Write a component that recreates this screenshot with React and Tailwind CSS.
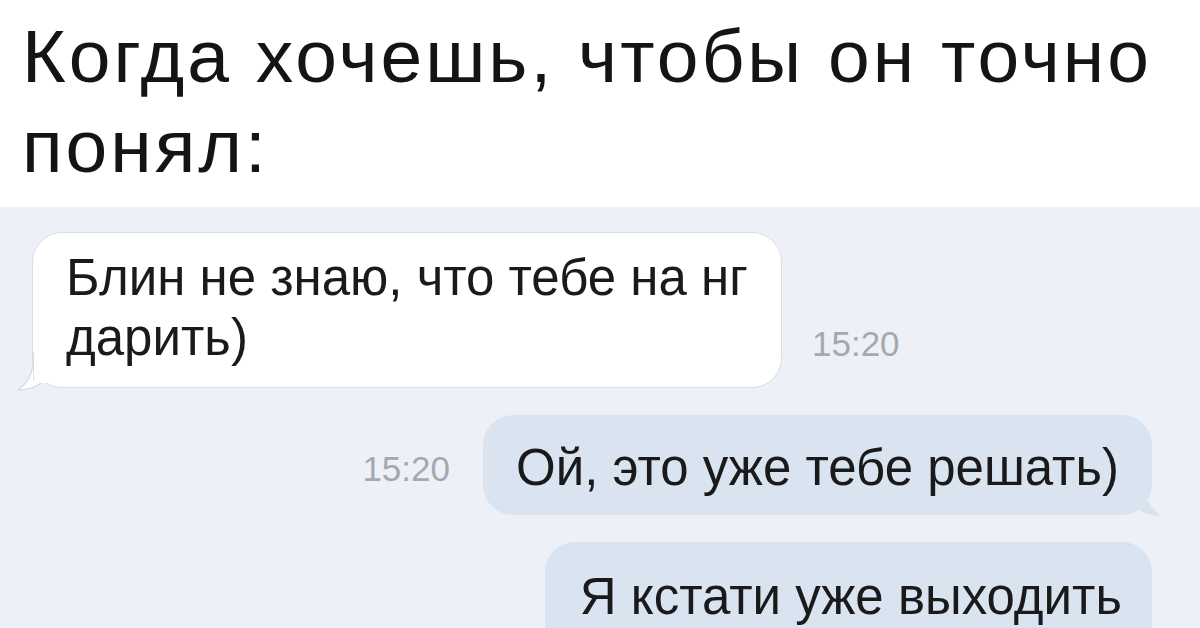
import React from 'react';

const FONT = { fontFamily: '"Liberation Sans", Arial, sans-serif' };

// Incoming bubble tail, bottom-left
const TailLeft = () => (
  <svg className="absolute left-[-16px] bottom-[-5px]" width="40" height="40" viewBox="0 0 40 40">
    <path d="M17 0 C17 20 12 30 1 38 C10 38 20 35 28 28 L17 28 Z" fill="#ffffff" stroke="#d8dce2" strokeWidth="1.5" />
    <rect x="17" y="0" width="20" height="31" fill="#ffffff" />
  </svg>
);

// Outgoing bubble tail, bottom-right
const TailRight = () => (
  <svg className="absolute right-[-24px] bottom-[-3px]" width="40" height="40" viewBox="0 0 40 40">
    <path d="M4 4 C10 22 16 32 26 38 C16 38 8 36 0 30 Z" fill="#dae4f0" />
  </svg>
);

const Time = ({ children, className = '' }) => (
  <span className={`text-[35px] leading-none text-[#a4a9b1] ${className}`}>{children}</span>
);

export default function App() {
  return (
    <div className="w-[1200px] h-[628px] overflow-hidden bg-white flex flex-col" style={FONT}>
      <div className="shrink-0 h-[207px] px-[22px] pt-[11px] text-[75px] leading-[90px] tracking-[3px] text-[#141414]">
        Когда хочешь, чтобы он точно
        <br />
        понял:
      </div>

      <div className="flex-1 bg-[#edf1f7] flex flex-col pt-[25px]">
        <div className="flex items-end pl-[32px]">
          <div className="relative shrink-0 w-[750px] h-[156px] rounded-[30px] bg-white border border-[#dadee4] pl-[33px] pt-[15px] text-[51px] leading-[60px] text-[#1a1a1a]">
            Блин не знаю, что тебе на нг
            <br />
            дарить)
            <TailLeft />
          </div>
          <Time className="ml-[30px] mb-[27px]">15:20</Time>
        </div>

        <div className="flex items-center justify-end pr-[48px] mt-[27px]">
          <Time className="mr-[33px] mt-[6px]">15:20</Time>
          <div className="relative shrink-0 h-[100px] rounded-[30px] bg-[#dae4f0] px-[33px] pt-[6px] flex items-center text-[51px] text-[#1a1a1a]">
            Ой, это уже тебе решать)
            <TailRight />
          </div>
        </div>

        <div className="flex justify-end pr-[48px] mt-[27px]">
          <div className="shrink-0 h-[110px] rounded-t-[30px] bg-[#dae4f0] pl-[35px] pr-[30px] pt-[17px] text-[51px] text-[#1a1a1a]">
            Я кстати уже выходить
          </div>
        </div>
      </div>
    </div>
  );
}
